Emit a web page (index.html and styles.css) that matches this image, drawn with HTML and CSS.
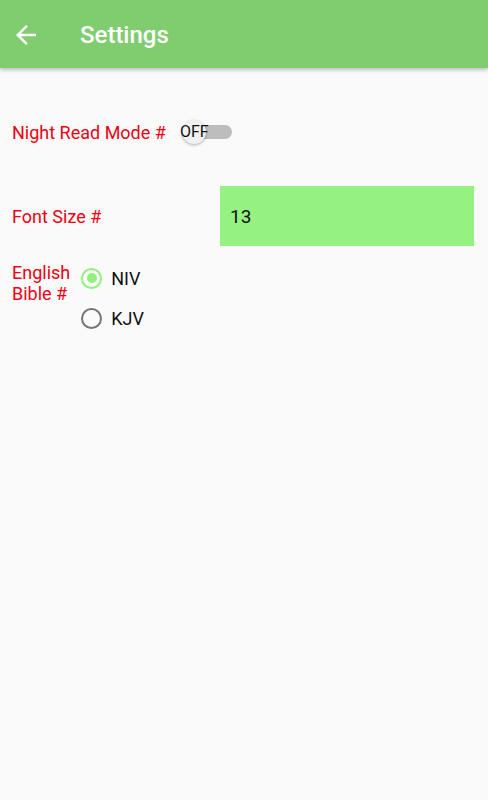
FILE: index.html
```html
<!DOCTYPE html>
<html>
<head>
<meta charset="utf-8">
<link rel="stylesheet" href="styles.css">
</head>
<body>
<header class="appbar">
  <svg class="back" width="30" height="30" viewBox="0 0 24 24"><path d="M20 11H7.83l5.59-5.59L12 4l-8 8 8 8 1.41-1.41L7.83 13H20v-2z" fill="#fff"/></svg>
  <h1 class="title">Settings</h1>
</header>
<main class="content">
  <div class="row night">
    <span class="label">Night Read Mode #</span>
    <div class="switch">
      <span class="track"></span>
      <span class="thumb"></span>
      <span class="switch-text">OFF</span>
    </div>
  </div>
  <div class="row font">
    <span class="label font-label">Font Size #</span>
    <div class="field">13</div>
  </div>
  <div class="row bible">
    <span class="label bible-label">English<br>Bible #</span>
    <div class="radios">
      <div class="radio"><span class="circle on"></span><span class="rtext">NIV</span></div>
      <div class="radio"><span class="circle"></span><span class="rtext">KJV</span></div>
    </div>
  </div>
</main>
</body>
</html>
```
FILE: styles.css
```css
html, body { margin: 0; padding: 0; }
body {
  background: #fafafa;
  font-family: Roboto, "Noto Sans", sans-serif;
  width: 488px;
  height: 800px;
  overflow: hidden;
}
.appbar {
  height: 68px;
  background: #80cd6f;
  display: flex;
  align-items: center;
  box-shadow: 0 2px 4px rgba(0,0,0,0.25);
  position: relative;
}
.back { margin-left: 11px; margin-top: 1px; }
.title {
  margin: 2px 0 0 39px;
  color: #fff;
  font-size: 24px;
  font-weight: 500;
}
.content { padding: 0 14px 0 12px; }
.label { color: #f00012; font-size: 18px; }
.row { display: flex; align-items: center; }
.night { height: 28px; margin-top: 50px; }
.switch {
  position: relative;
  width: 56px;
  height: 28px;
  margin-left: 13px;
}
.track {
  position: absolute;
  left: 6px; top: 7px;
  width: 47px; height: 14px;
  border-radius: 7px;
  background: #bdbdbd;
}
.thumb {
  position: absolute;
  left: 3px; top: 2px;
  width: 24px; height: 24px;
  border-radius: 50%;
  background: #f1f1f1;
  box-shadow: 0 1px 3px rgba(0,0,0,0.3);
}
.switch-text {
  position: absolute;
  left: 1px; top: 4px;
  font-size: 16px;
  color: #111;
  line-height: 20px;
}
.font { margin-top: 40px; height: 60px; justify-content: space-between; }
.field {
  width: 254px;
  height: 60px;
  background: #95f280;
  box-sizing: border-box;
  padding-left: 10px;
  display: flex;
  align-items: center;
  font-size: 19px;
  color: #111;
}
.bible { margin-top: 16px; align-items: flex-start; }
.bible-label { line-height: 21px; display: block; }
.radios { margin-left: 11px; display: flex; flex-direction: column; gap: 18px; margin-top: 5px; }
.radio { display: flex; align-items: center; height: 22px; }
.circle {
  width: 17px; height: 17px;
  border: 2.5px solid #757575;
  border-radius: 50%;
  position: relative;
  box-sizing: content-box;
}
.circle.on { border-color: #93f07f; }
.circle.on::after {
  content: "";
  position: absolute;
  left: 3.5px; top: 3.5px;
  width: 10px; height: 10px;
  border-radius: 50%;
  background: #93f07f;
}
.rtext { margin-left: 9px; font-size: 18px; color: #111; }
```
